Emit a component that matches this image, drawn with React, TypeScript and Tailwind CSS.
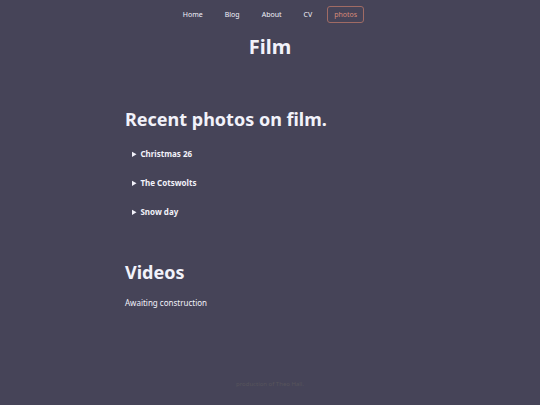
import { useState } from "react";

const NAV_LINKS = [
  { label: "Home", href: "#home" },
  { label: "Blog", href: "#blog" },
  { label: "About", href: "#about" },
  { label: "CV", href: "#cv" },
  { label: "photos", href: "#photos", current: true },
];

const ALBUMS = [
  { title: "Christmas 26", note: "Photos coming soon." },
  { title: "The Cotswolts", note: "Photos coming soon." },
  { title: "Snow day", note: "Photos coming soon." },
];

function NavBar() {
  return (
    <nav className="flex items-center justify-center gap-2 pt-[6px] text-[7px] leading-[9px]">
      {NAV_LINKS.map((link) => (
        <a
          key={link.label}
          href={link.href}
          aria-current={link.current ? "page" : undefined}
          className={`rounded-[3px] border px-[6px] py-[3px] ${
            link.current
              ? "border-[#a06b64] text-[#d98a78]"
              : "border-transparent hover:text-[#d98a78]"
          }`}
        >
          {link.label}
        </a>
      ))}
    </nav>
  );
}

function Album({ title, note }: { title: string; note: string }) {
  const [open, setOpen] = useState(false);

  return (
    <details onToggle={(e) => setOpen(e.currentTarget.open)}>
      <summary className="cursor-pointer text-[8px] leading-[13px] font-bold">
        {title}
      </summary>
      {open && <p className="pt-2 text-[8px] leading-[13px]">{note}</p>}
    </details>
  );
}

export default function App() {
  return (
    <div className="flex min-h-screen flex-col bg-[#464458] font-['Noto_Sans',sans-serif] text-[#f2f2fa]">
      <header>
        <NavBar />
        <h1 className="pt-2 text-center text-[20px] leading-8 font-bold">
          Film
        </h1>
      </header>

      <main className="mx-auto w-full max-w-[290px] grow pt-10">
        <section>
          <h2 className="text-[18px] leading-8 font-bold">
            Recent photos on film.
          </h2>
          <div className="flex flex-col gap-4 px-[7px] pt-3">
            {ALBUMS.map((album) => (
              <Album key={album.title} {...album} />
            ))}
          </div>
        </section>

        <section className="pt-[38px]">
          <h2 className="text-[18px] leading-8 font-bold">Videos</h2>
          <p className="pt-2 text-[8px] leading-[13px]">
            Awaiting construction
          </p>
        </section>
      </main>

      <footer className="pb-4 text-center text-[6px] leading-[9px] text-[#57545c]">
        production of Theo Hall.
      </footer>
    </div>
  );
}
